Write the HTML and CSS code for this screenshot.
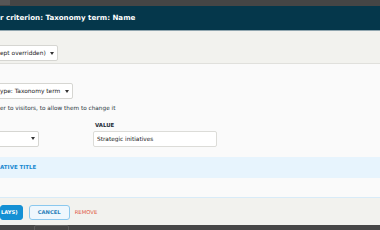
FILE: index.html
```html
<!DOCTYPE html>
<html lang="en">
<head>
    <meta charset="UTF-8">
    <meta name="viewport" content="width=device-width, initial-scale=1.0">
    <title>Configure filter criterion</title>
    <link rel="stylesheet" href="styles.css">
</head>
<body>
    <div class="topbar"><span class="topbar-tab"></span></div>
    <div class="dialog">
        <div class="dialog-title">r criterion: Taxonomy term: Name</div>

        <div class="scope">
            <div class="select select-scope">
                <span>ept overridden)</span>
                <svg class="arrow" width="4" height="3" viewBox="0 0 4 3"><polygon points="0,0 4,0 2,3"/></svg>
            </div>
        </div>

        <div class="main">
            <div class="select select-type">
                <span>ype: Taxonomy term</span>
                <svg class="arrow" width="4" height="3" viewBox="0 0 4 3"><polygon points="0,0 4,0 2,3"/></svg>
            </div>
            <div class="description">er to visitors, to allow them to change it</div>

            <div class="filter-row">
                <div class="select select-operator">
                    <span></span>
                    <svg class="arrow" width="4" height="3" viewBox="0 0 4 3"><polygon points="0,0 4,0 2,3"/></svg>
                </div>
                <div class="value-group">
                    <label for="value">Value</label>
                    <input id="value" type="text" value="Strategic initiatives">
                </div>
            </div>

            <div class="details">
                <div class="details-summary">ative title</div>
                <div class="details-body"></div>
            </div>
        </div>

        <div class="actions">
            <button class="button button-primary">lays)</button>
            <button class="button button-cancel">Cancel</button>
            <a class="remove-link" href="#">Remove</a>
        </div>
    </div>
    <div class="bottombar"><span class="bottombar-button"></span></div>
</body>
</html>
```

FILE: styles.css
```css
:root {
    --overlay-color: #454545;
    --title-color: #05374b;
    --scope-bg: #f2f2ee;
    --content-bg: #fafafa;
    --border-color: #d6d6d2;
    --text-color: #2b3640;
    --link-color: #1a8ad1;
    --summary-bg: #e7f4fd;
    --danger-color: #e0553b;
}

html, body {
    margin: 0;
    padding: 0;
}

body {
    width: 380px;
    height: 230px;
    overflow: hidden;
    background-color: var(--overlay-color);
    font-family: "DejaVu Sans", sans-serif;
    color: var(--text-color);
}

.topbar {
    height: 6px;
    background-color: var(--overlay-color);
}

.topbar-tab {
    display: block;
    width: 10px;
    height: 5px;
    background-color: #565656;
}

.dialog-title {
    height: 24px;
    line-height: 24px;
    background-color: var(--title-color);
    color: #fff;
    font-size: 7.1px;
    font-weight: bold;
    white-space: nowrap;
    border-bottom: 1px solid #91a6af;
}

.scope {
    background-color: var(--scope-bg);
    height: 33px;
    padding-top: 14px;
    box-sizing: border-box;
    border-bottom: 1px solid #e0e0dc;
}

.select {
    display: flex;
    align-items: center;
    justify-content: space-between;
    height: 16px;
    box-sizing: border-box;
    margin-left: -2px;
    padding: 0 3px 0 1px;
    background-color: #fff;
    border: 1px solid var(--border-color);
    border-radius: 2px;
    font-size: 5.9px;
    color: #222;
    white-space: nowrap;
}

.arrow {
    fill: #333;
    flex: none;
}

.select-scope {
    width: 60px;
}

.select-type {
    width: 75px;
}

.select-operator {
    width: 41px;
    flex: none;
}

.main {
    background-color: var(--content-bg);
    padding-top: 19px;
}

.description {
    margin-top: 5px;
    line-height: 8px;
    font-size: 5.75px;
    white-space: nowrap;
}

.filter-row {
    display: flex;
    align-items: flex-end;
    gap: 54px;
    margin-top: 9.5px;
}

.value-group {
    display: flex;
    flex-direction: column;
}

label {
    font-size: 5.4px;
    font-weight: bold;
    text-transform: uppercase;
    line-height: 7px;
    margin-bottom: 2px;
    padding-left: 2px;
    color: #1c2a36;
}

input {
    width: 124px;
    height: 16px;
    box-sizing: border-box;
    margin: 0;
    padding: 0 3px;
    border: 1px solid #dcdcd8;
    border-radius: 2px;
    background-color: #fff;
    font-family: "DejaVu Sans", sans-serif;
    font-size: 5.8px;
    color: #222;
}

.details {
    margin-top: 10px;
    border-bottom: 1px solid #d8ebf8;
}

.details-summary {
    height: 21px;
    line-height: 21px;
    background-color: var(--summary-bg);
    color: var(--link-color);
    font-size: 5.5px;
    font-weight: bold;
    text-transform: uppercase;
    white-space: nowrap;
}

.details-body {
    height: 19px;
}

.actions {
    display: flex;
    align-items: flex-start;
    height: 27px;
    box-sizing: border-box;
    padding-top: 7px;
    background-color: var(--scope-bg);
}

.button {
    height: 15px;
    margin: 0;
    border-radius: 3px;
    font-family: "DejaVu Sans", sans-serif;
    font-size: 5.2px;
    font-weight: bold;
    text-transform: uppercase;
    cursor: pointer;
}

.button-primary {
    padding: 0 4px 0 0;
    border: 1px solid #1490d4;
    background-color: #1490d4;
    color: #fff;
}

.button-cancel {
    width: 41px;
    margin-left: 6px;
    padding: 0;
    border: 1px solid #8ac8ee;
    background-color: #eef7fd;
    color: #2a80b9;
}

.remove-link {
    margin-left: 5px;
    line-height: 15px;
    font-size: 5.3px;
    text-transform: uppercase;
    color: var(--danger-color);
    text-decoration: none;
}

.bottombar {
    height: 5px;
    background-color: #474747;
}

.bottombar-button {
    display: block;
    width: 35px;
    height: 10px;
    margin-left: 34px;
    box-sizing: border-box;
    border: 1px solid #5e5e5e;
    border-radius: 2px;
}
```
